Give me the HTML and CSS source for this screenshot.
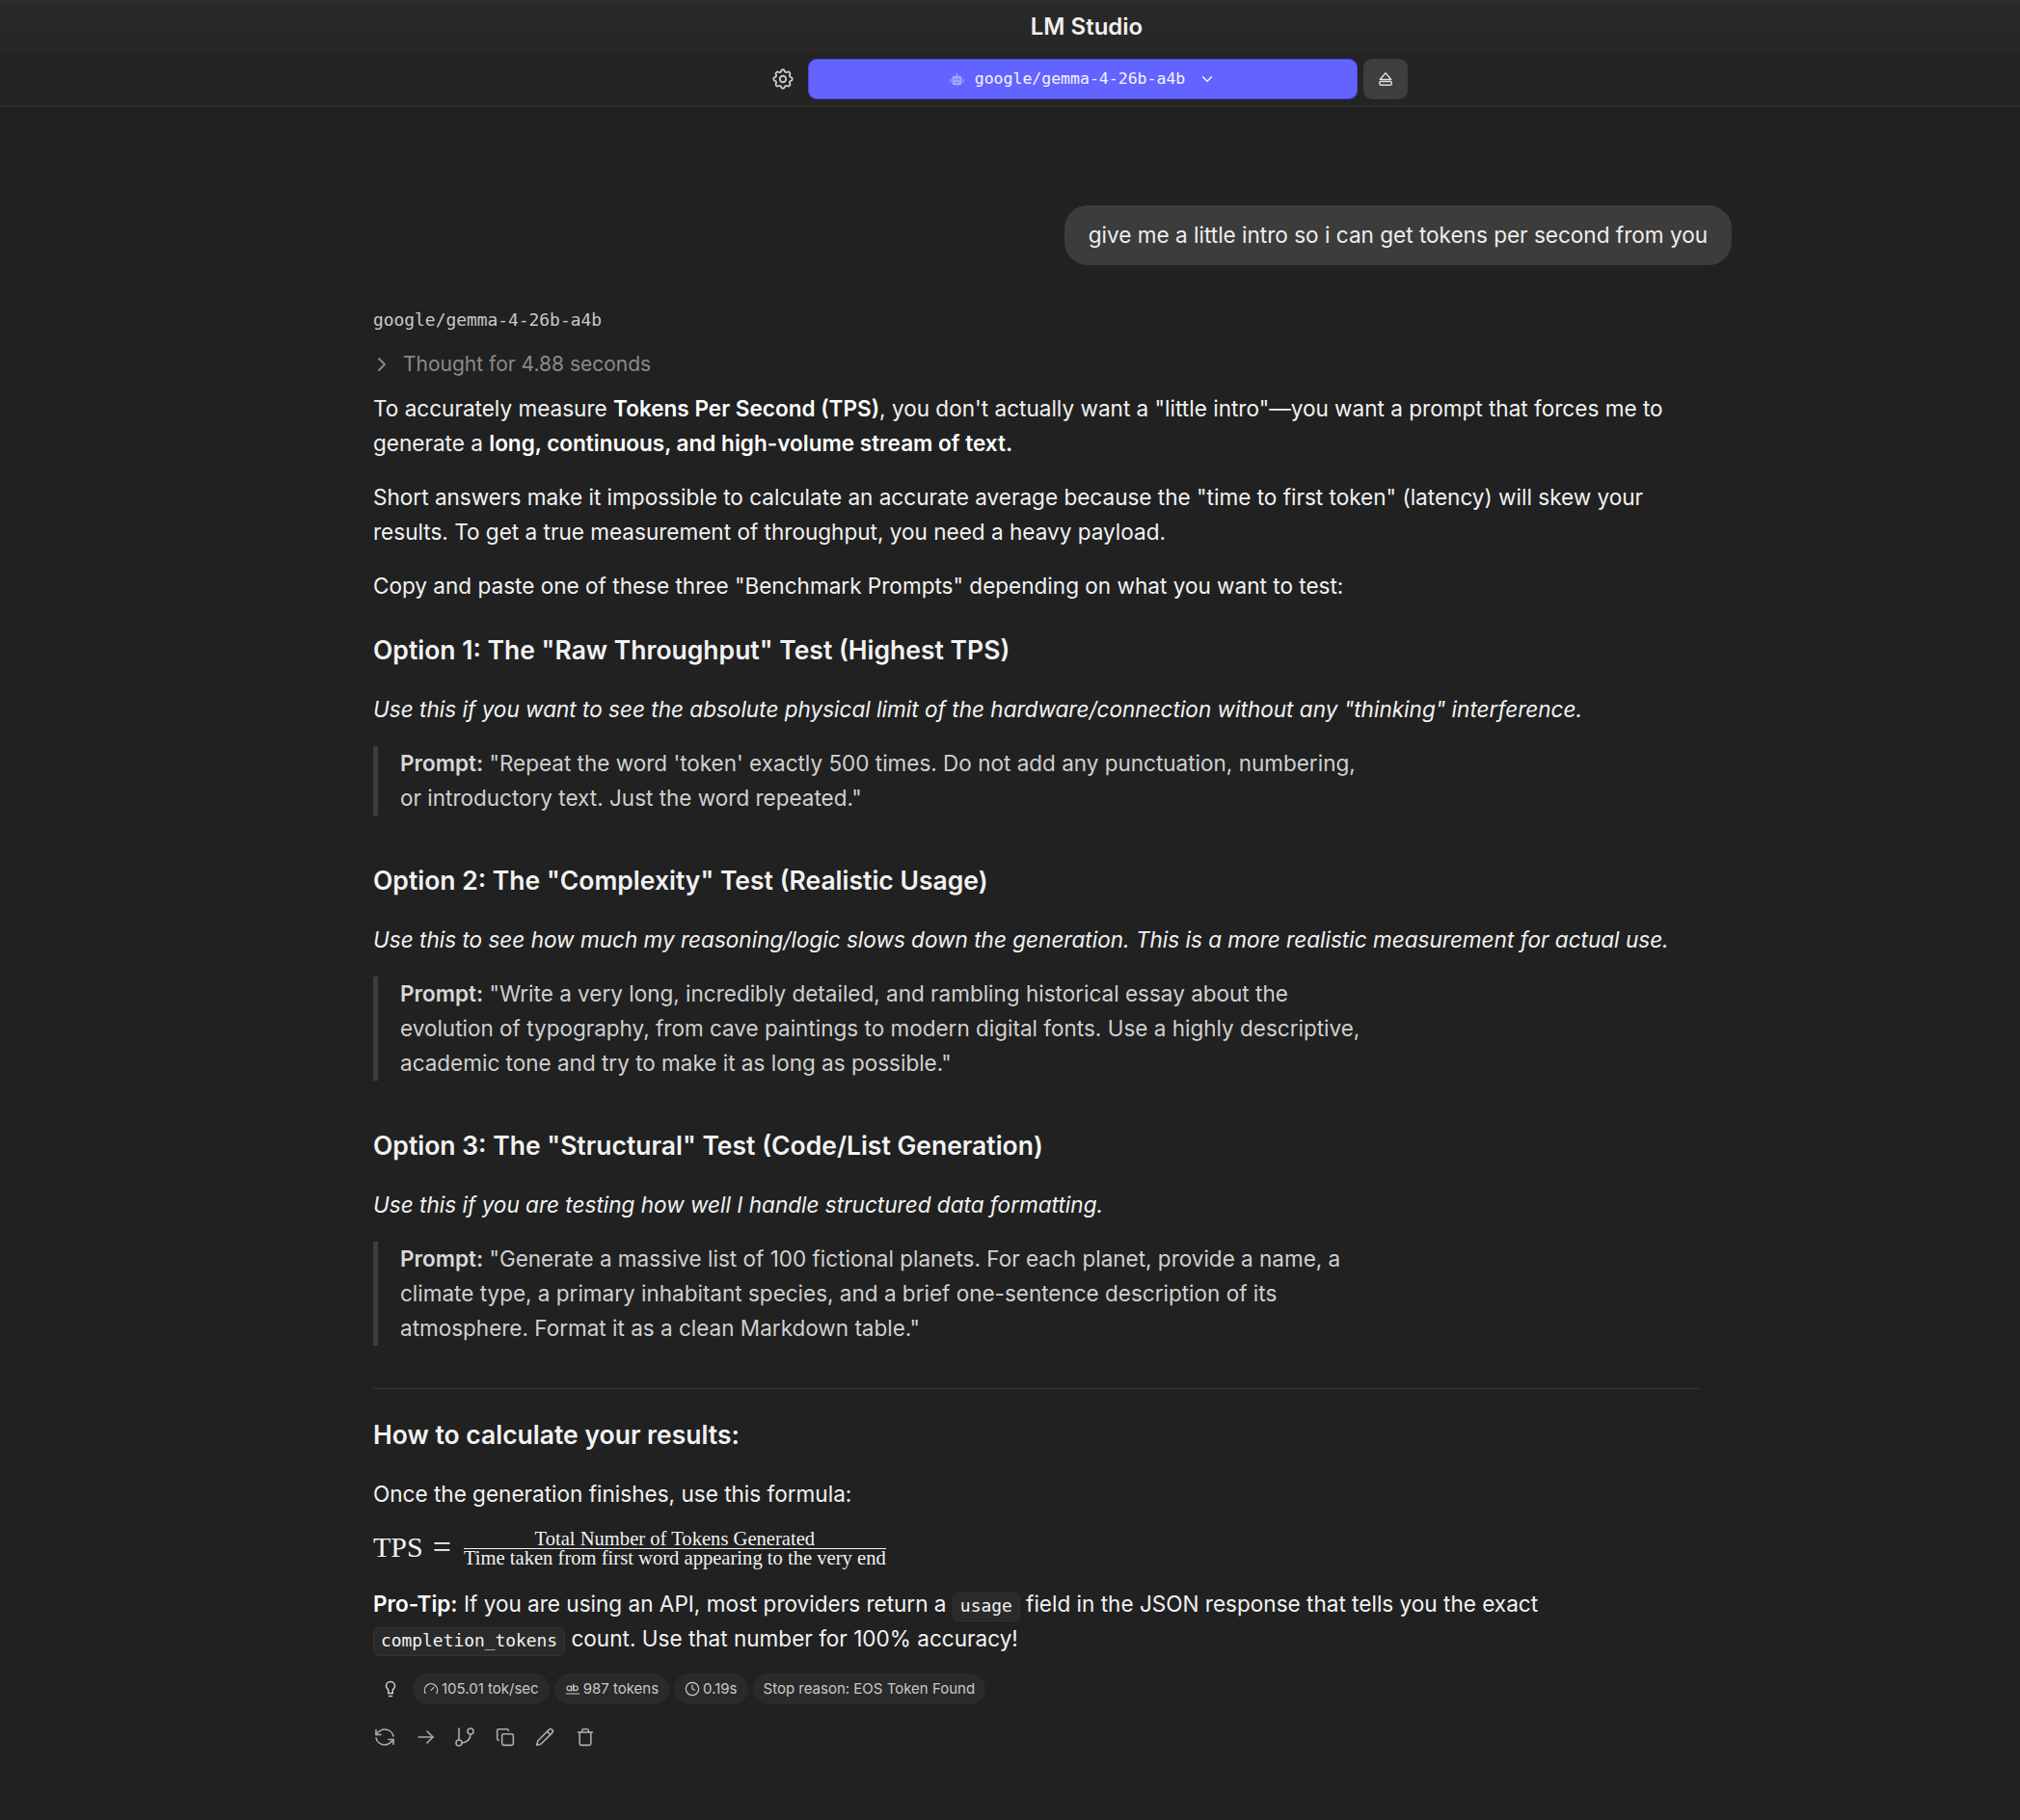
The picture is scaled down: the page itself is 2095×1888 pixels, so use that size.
FILE: index.html
```html
<!DOCTYPE html>
<html lang="en">
<head>
<meta charset="utf-8">
<title>LM Studio</title>
<link rel="stylesheet" href="styles.css">
</head>
<body>
<header class="titlebar"><h1 class="app-title">LM Studio</h1></header>
<div class="toolbar">
  <svg class="ic gear" viewBox="0 0 24 24"><path d="M10.325 4.317c.426 -1.756 2.924 -1.756 3.35 0a1.724 1.724 0 0 0 2.573 1.066c1.543 -.94 3.31 .826 2.37 2.37a1.724 1.724 0 0 0 1.065 2.572c1.756 .426 1.756 2.924 0 3.35a1.724 1.724 0 0 0 -1.066 2.573c.94 1.543 -.826 3.31 -2.37 2.37a1.724 1.724 0 0 0 -2.572 1.065c-.426 1.756 -2.924 1.756 -3.35 0a1.724 1.724 0 0 0 -2.573 -1.066c-1.543 .94 -3.31 -.826 -2.37 -2.37a1.724 1.724 0 0 0 -1.065 -2.572c-1.756 -.426 -1.756 -2.924 0 -3.35a1.724 1.724 0 0 0 1.066 -2.573c-.94 -1.543 .826 -3.31 2.37 -2.37c1 .608 2.296 .07 2.572 -1.065z"/><circle cx="12" cy="12" r="3"/></svg>
  <div class="model-btn">
    <svg class="bot" viewBox="0 0 24 24"><path class="bot-fill" d="M11 1.500h2v4.500h4a3 3 0 0 1 3 3v9a3 3 0 0 1-3 3H7a3 3 0 0 1-3-3v-9a3 3 0 0 1 3-3h4z"/><rect class="bot-fill" x="0.500" y="11" width="2" height="6" rx="1"/><rect class="bot-fill" x="21.500" y="11" width="2" height="6" rx="1"/><rect class="bot-eye" x="8" y="10.500" width="2.200" height="2.500"/><rect class="bot-eye" x="13.800" y="10.500" width="2.200" height="2.500"/><rect class="bot-eye" x="9" y="16" width="6" height="1.200"/></svg>
    <span class="model-name">google/gemma-4-26b-a4b</span>
    <svg class="ic chev" viewBox="0 0 24 24"><path d="m6 9 6 6 6-6"/></svg>
  </div>
  <div class="eject-btn">
    <svg class="ic eject" viewBox="0 0 14 14"><path d="M7 .8 12.800 7.500H1.200z"/><rect x=".8" y="9.500" width="12.400" height="3.700" rx="1.200"/></svg>
  </div>
</div>
<main class="chat">
  <div class="user-row"><div class="bubble">give me a little intro so i can get tokens per second from you</div></div>
  <div class="answer">
    <div class="model-label">google/gemma-4-26b-a4b</div>
    <div class="thought">
      <svg class="ic thought-chev" viewBox="0 0 24 24"><path d="m9 6 6 6-6 6"/></svg>
      <span>Thought for 4.88 seconds</span>
    </div>
    <p>To accurately measure <strong>Tokens Per Second (TPS)</strong>, you don't actually want a "little intro"—you want a prompt that forces me to generate a <strong>long, continuous, and high-volume stream of text.</strong></p>
    <p>Short answers make it impossible to calculate an accurate average because the "time to first token" (latency) will skew your results. To get a true measurement of throughput, you need a heavy payload.</p>
    <p>Copy and paste one of these three "Benchmark Prompts" depending on what you want to test:</p>

    <h3>Option 1: The "Raw Throughput" Test (Highest TPS)</h3>
    <p><em>Use this if you want to see the absolute physical limit of the hardware/connection without any "thinking" interference.</em></p>
    <blockquote><strong>Prompt:</strong> "Repeat the word 'token' exactly 500 times. Do not add any punctuation, numbering, or introductory text. Just the word repeated."</blockquote>

    <h3>Option 2: The "Complexity" Test (Realistic Usage)</h3>
    <p><em>Use this to see how much my reasoning/logic slows down the generation. This is a more realistic measurement for actual use.</em></p>
    <blockquote><strong>Prompt:</strong> "Write a very long, incredibly detailed, and rambling historical essay about the evolution of typography, from cave paintings to modern digital fonts. Use a highly descriptive, academic tone and try to make it as long as possible."</blockquote>

    <h3>Option 3: The "Structural" Test (Code/List Generation)</h3>
    <p><em>Use this if you are testing how well I handle structured data formatting.</em></p>
    <blockquote><strong>Prompt:</strong> "Generate a massive list of 100 fictional planets. For each planet, provide a name, a climate type, a primary inhabitant species, and a brief one-sentence description of its atmosphere. Format it as a clean Markdown table."</blockquote>

    <hr>
    <h3 class="h-calc">How to calculate your results:</h3>
    <p>Once the generation finishes, use this formula:</p>
    <div class="formula">
      <span class="f-lhs">TPS</span><span class="f-eq">=</span>
      <span class="frac"><span class="num">Total Number of Tokens Generated</span><span class="den">Time taken from first word appearing to the very end</span></span>
    </div>
    <p class="protip"><strong>Pro-Tip:</strong> If you are using an API, most providers return a <code>usage</code> field in the JSON response that tells you the exact <code>completion_tokens</code> count. Use that number for 100% accuracy!</p>
    <div class="stats">
      <svg class="ic bulb" viewBox="0 0 24 24"><path d="M15 14c.2-1 .7-1.7 1.5-2.5 1-.9 1.5-2.2 1.5-3.5A6 6 0 0 0 6 8c0 1 .2 2.2 1.500 3.500.7.7 1.300 1.500 1.500 2.500"/><path d="M9 18h6"/><path d="M10 22h4"/><path d="M9 14.500V18M15 14.500V18"/></svg>
      <div class="chip"><svg class="ic" viewBox="0 0 24 24"><path d="m12 14 4-4"/><path d="M3.340 19a10 10 0 1 1 17.320 0"/></svg>105.01 tok/sec</div>
      <div class="chip"><svg class="ic" viewBox="0 0 24 24"><circle cx="6.500" cy="11" r="3.500"/><path d="M10 7.500V15"/><circle cx="16.500" cy="11" r="3.500"/><path d="M13 5v10"/><path d="M2 19.500h20"/></svg>987 tokens</div>
      <div class="chip"><svg class="ic" viewBox="0 0 24 24"><circle cx="12" cy="12" r="10"/><path d="M12 6v6l4 2"/></svg>0.19s</div>
      <div class="chip">Stop reason: EOS Token Found</div>
    </div>
    <div class="actions">
      <svg class="ic" viewBox="-1 -3 24 24"><path d="M20 8C19 4 15.500 1 11 1 7.500 1 5 2.500 2 6.500"/><path d="M2 1.500v5h5"/><path d="M2 10c1 4 4.500 7 9 7 3.500 0 6-1.500 9-5.500"/><path d="M20 16.500v-5h-5"/></svg>
      <svg class="ic" viewBox="0 0 24 24"><path d="M5 12h15"/><path d="m14 6 6 6-6 6"/></svg>
      <svg class="ic" viewBox="0 0 24 24"><path d="M6 3v12"/><circle cx="18" cy="6" r="3"/><circle cx="6" cy="18" r="3"/><path d="M18 9a9 9 0 0 1-9 9"/></svg>
      <svg class="ic scaled" viewBox="-2.400 -2.400 28.800 28.800"><rect x="8" y="8" width="14" height="14" rx="2"/><path d="M4 16c-1.100 0-2-.9-2-2V4c0-1.100.9-2 2-2h10c1.100 0 2 .9 2 2"/></svg>
      <svg class="ic scaled" viewBox="-2.400 -2.400 28.800 28.800"><path d="M21.170 6.810a1 1 0 0 0-3.990-3.990L3.840 16.170a2 2 0 0 0-.5.830l-1.320 4.350a.5.5 0 0 0 .62.620l4.350-1.320a2 2 0 0 0 .83-.5z"/><path d="m15 5 4 4"/></svg>
      <svg class="ic scaled" viewBox="-2.400 -2.400 28.800 28.800"><path d="M3 6h18"/><path d="M19 6v14c0 1-1 2-2 2H7c-1 0-2-1-2-2V6"/><path d="M8 6V4c0-1 1-2 2-2h4c1 0 2 1 2 2v2"/></svg>
    </div>
  </div>
</main>
</body>
</html>
```
FILE: styles.css
```css
* { box-sizing: border-box; }
html, body { margin: 0; padding: 0; }
body {
  background: #212121;
  color: #f2f2f2;
  font-family: Inter, "Noto Sans", sans-serif;
  font-size: 22.56px;
  line-height: 36px;
  height: 1888px;
  overflow: hidden;
}
.ic {
  fill: none;
  stroke: currentColor;
  stroke-width: 2;
  stroke-linecap: round;
  stroke-linejoin: round;
  flex: none;
}
.titlebar {
  height: 54px;
  padding: 1px 0 0 159px;
  background: linear-gradient(#2e2e2e, #292929 8%, #262626);
  display: flex;
  align-items: center;
  justify-content: center;
}
.app-title {
  margin: 0;
  font-size: 24px;
  font-weight: 600;
  line-height: 54px;
  color: #f0f0f0;
}
.toolbar {
  height: 57px;
  padding: 7px 0 0 799px;
  display: flex;
  align-items: flex-start;
  background: #242424;
  border-bottom: 1px solid #333;
}
.gear { width: 26px; height: 26px; color: #ccc; margin: 8px 13px 0 0; stroke-width: 1.7; }
.model-btn {
  width: 570px;
  height: 42px;
  background: #6363ff;
  border: 1px solid #4f46e5;
  border-radius: 9px;
  display: flex;
  align-items: center;
  justify-content: center;
  gap: 10px;
  color: #f4f4ff;
}
.bot { width: 15px; height: 15px; margin-right: 1px; }
.bot-fill { fill: #a3a3ff; }
.bot-eye { fill: #6363ff; }
.model-name {
  font-family: "DejaVu Sans Mono", "Liberation Mono", monospace;
  font-size: 16.5px;
  line-height: 42px;
}
.chev { width: 18px; height: 18px; margin-left: 4px; }
.eject-btn {
  width: 46px;
  height: 42px;
  margin-left: 6px;
  background: #3e3e3e;
  border-radius: 9px;
  display: flex;
  align-items: center;
  justify-content: center;
}
.eject { width: 14px; height: 14px; color: #ddd; stroke-width: 1.4; }
.chat { padding: 102px 0 0 387px; }
.user-row { width: 1409px; display: flex; justify-content: flex-end; }
.bubble {
  height: 62px;
  background: #3c3c3c;
  border-radius: 24px;
  padding: 13px 25px;
  color: #eee;
}
.answer { width: 1376px; margin-top: 45px; }
.model-label {
  font-family: "DejaVu Sans Mono", "Liberation Mono", monospace;
  font-size: 17.9px;
  line-height: 24px;
  color: #c8c8c8;
}
.thought {
  display: flex;
  align-items: center;
  gap: 10px;
  margin-top: 16px;
  height: 36px;
  font-size: 21px;
  color: #8a8a8a;
}
.thought-chev { width: 24px; height: 24px; margin-left: -3px; stroke-width: 1.8; }
p { margin: 10px 0 20px; }
p + p { margin-top: 0; }
strong { font-weight: 600; color: #fff; }
em { font-style: italic; }
h3 {
  margin: 0 0 26px;
  font-size: 26.5px;
  font-weight: 600;
  line-height: 36px;
  padding-top: 10px;
}
blockquote {
  margin: 0 0 39px;
  width: 1034px;
  border-left: 5px solid #3e3e3e;
  padding-left: 23px;
  font-size: 22.5px;
  color: #d0d0d0;
}
blockquote strong { color: #d8d8d8; }
hr { border: 0; border-top: 1px solid #383838; margin: 44px 0 14px; }
.h-calc { padding-top: 15px; }
.formula {
  font-family: "Liberation Serif", serif;
  display: flex;
  align-items: center;
  height: 44px;
  margin: -5px 0 19px;
  color: #f2f2f2;
}
.f-lhs { font-size: 30px; }
.f-eq { font-size: 34px; margin: 0 13px 0 10px; }
.frac { display: flex; flex-direction: column; align-items: center; font-size: 20.6px; line-height: 20px; margin-top: 1px; }
.num { border-bottom: 1.5px solid #f2f2f2; width: 100%; text-align: center; }
.den { line-height: 18px; }
code {
  font-family: "DejaVu Sans Mono", "Liberation Mono", monospace;
  font-size: 17.9px;
  line-height: 24px;
  display: inline-block;
  height: 30px;
  background: #2a2a2a;
  border: 1px solid #333;
  border-radius: 6px;
  padding: 1px 7px;
}
.protip { margin-bottom: 18px; }
.stats {
  display: flex;
  align-items: center;
  gap: 5px;
  height: 32px;
  font-size: 15px;
  color: #c8c8c8;
}
.bulb { width: 18px; height: 18px; margin: 0 9px; color: #ccc; }
.chip {
  height: 32px;
  background: #2a2a2a;
  border-radius: 16px;
  padding: 0 11px;
  display: flex;
  align-items: center;
  gap: 3px;
  line-height: 32px;
}
.chip .ic { width: 16px; height: 16px; stroke-width: 1.8; }
.actions {
  display: flex;
  gap: 17.6px;
  margin-top: 22px;
  color: #acacac;
}
.actions .ic { width: 24px; height: 24px; stroke-width: 1.6; }
.actions .scaled { stroke-width: 1.9; }
```
